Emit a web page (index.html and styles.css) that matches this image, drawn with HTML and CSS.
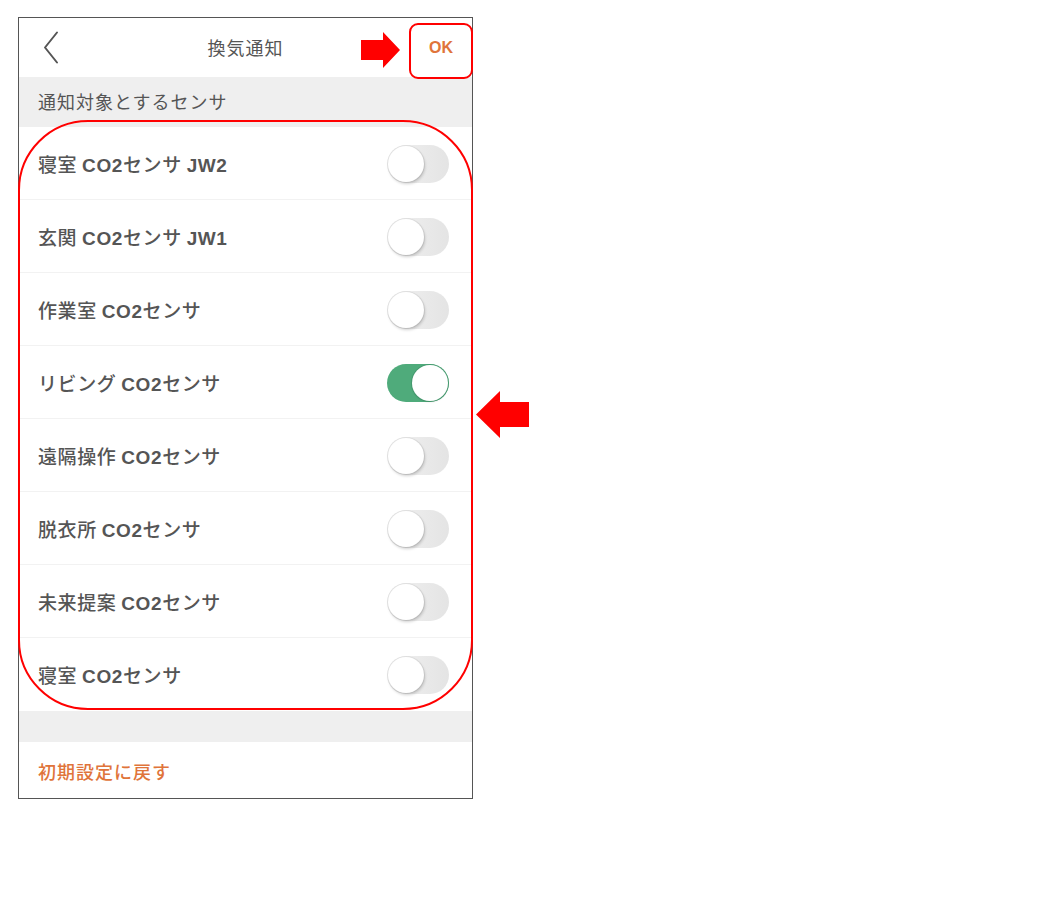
FILE: index.html
```html
<!DOCTYPE html>
<html lang="ja">
<head>
<meta charset="utf-8">
<title>換気通知</title>
<link rel="stylesheet" href="styles.css">
</head>
<body>
<div class="stage">
  <div class="phone">
    <header class="nav">
      <span class="back">
        <svg width="16" height="34" viewBox="0 0 16 34"><polyline points="14,1.5 2,16.5 14,31.5" fill="none" stroke="#555" stroke-width="2" stroke-linecap="round" stroke-linejoin="round"/></svg>
      </span>
      <h1 class="title">換気通知</h1>
      <span class="ok">OK</span>
    </header>
    <div class="section">通知対象とするセンサ</div>
    <ul class="list">
      <li class="row"><span class="label">寝室 <span class="en">CO2</span>センサ <span class="en">JW2</span></span><span class="toggle"></span></li>
      <li class="row"><span class="label">玄関 <span class="en">CO2</span>センサ <span class="en">JW1</span></span><span class="toggle"></span></li>
      <li class="row"><span class="label">作業室 <span class="en">CO2</span>センサ</span><span class="toggle"></span></li>
      <li class="row"><span class="label">リビング <span class="en">CO2</span>センサ</span><span class="toggle on"></span></li>
      <li class="row"><span class="label">遠隔操作 <span class="en">CO2</span>センサ</span><span class="toggle"></span></li>
      <li class="row"><span class="label">脱衣所 <span class="en">CO2</span>センサ</span><span class="toggle"></span></li>
      <li class="row"><span class="label">未来提案 <span class="en">CO2</span>センサ</span><span class="toggle"></span></li>
      <li class="row"><span class="label">寝室 <span class="en">CO2</span>センサ</span><span class="toggle"></span></li>
    </ul>
    <div class="spacer"></div>
    <div class="reset">初期設定に戻す</div>

    <div class="mark mark-ok"></div>
    <div class="mark mark-list"></div>
    <svg class="arrow arrow-right" width="40" height="37" viewBox="0 0 40 37"><polygon points="0,8 22,8 22,0 39,18 22,36 22,28 0,28" fill="#ff0000"/></svg>
    <svg class="arrow arrow-left" width="53" height="48" viewBox="0 0 53 48"><polygon points="0,23.5 24,0 24,11 53,11 53,36 24,36 24,47" fill="#ff0000"/></svg>
  </div>
</div>
</body>
</html>
```
FILE: styles.css
```css
* { box-sizing: border-box; margin: 0; padding: 0; }
html, body { background: #fff; }
body {
  font-family: "Noto Sans CJK JP", "Noto Sans", sans-serif;
  color: #555;
}
.stage {
  padding: 17px 0 0 18px;
}
.phone {
  position: relative;
  width: 455px;
  height: 782px;
  border: 1px solid #555;
  background: #fff;
  display: flex;
  flex-direction: column;
}
.nav {
  height: 59px;
  display: flex;
  align-items: center;
  justify-content: space-between;
  padding: 0 17px 0 24px;
  position: relative;
}
.back { display: flex; width: 16px; height: 34px; }
.title {
  position: absolute;
  left: 0; right: 0;
  text-align: center;
  font-size: 18px;
  font-weight: 400;
  letter-spacing: 1px;
  line-height: 59px;
  color: #555;
  pointer-events: none;
}
.ok {
  font-family: "Liberation Sans", sans-serif;
  font-weight: 700;
  font-size: 16px;
  color: #e0743a;
  width: 26px;
}
.section {
  height: 50px;
  background: #efefef;
  font-size: 18px;
  letter-spacing: 1px;
  line-height: 48px;
  padding-left: 19px;
  color: #555;
}
.list { list-style: none; }
.row {
  height: 73px;
  display: flex;
  align-items: center;
  justify-content: space-between;
  padding: 0 23px 0 19px;
  border-bottom: 1px solid #f2f2f2;
}
.row:last-child { border-bottom: none; }
.label {
  font-size: 19px;
  font-weight: 500;
  letter-spacing: 0.6px;
  color: #555;
}
.en {
  font-family: "Liberation Sans", sans-serif;
  font-weight: 700;
  color: #555;
}
.toggle {
  position: relative;
  width: 62px;
  height: 38px;
  border-radius: 19px;
  background: linear-gradient(90deg, #f1f1f1, #e4e4e4);
  margin-top: 1px;
}
.toggle::after {
  content: "";
  position: absolute;
  top: 1px;
  left: 1px;
  width: 36px;
  height: 36px;
  border-radius: 50%;
  background: #fff;
  box-shadow: 0 0 0 1px rgba(0,0,0,0.06), 1px 2px 3px rgba(0,0,0,0.18);
}
.toggle.on { background: #4fab7b; }
.toggle.on::after {
  left: 25px;
  box-shadow: 0 0 0 1px rgba(60,140,100,0.5), 0 1px 2px rgba(0,0,0,0.12);
}
.spacer {
  height: 31px;
  background: #efefef;
}
.reset {
  flex: 1;
  display: flex;
  align-items: center;
  padding-left: 19px;
  padding-top: 1px;
  font-size: 18px;
  font-weight: 500;
  letter-spacing: 1px;
  color: #e0743a;
}
.mark {
  position: absolute;
  border: 2px solid #ff0000;
  pointer-events: none;
}
.mark-ok {
  left: 390px;
  top: 5px;
  width: 64px;
  height: 56px;
  border-radius: 9px;
}
.mark-list {
  left: -1px;
  top: 102px;
  width: 455px;
  height: 590px;
  border-radius: 70px;
}
.arrow { position: absolute; }
.arrow-right { left: 342px; top: 14px; }
.arrow-left { left: 457px; top: 373px; }
```
